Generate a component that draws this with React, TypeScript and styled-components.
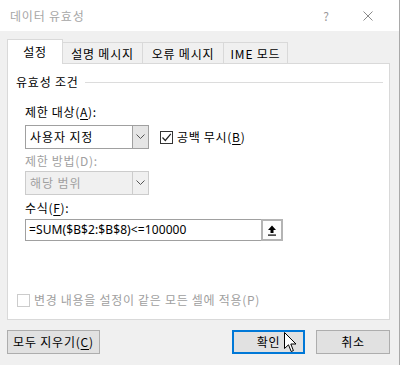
import React from "react";
import styled, { createGlobalStyle } from "styled-components";

const Global = createGlobalStyle`
  html, body { margin: 0; padding: 0; background: #f0f0f0; }
  body { font-family: "Noto Sans CJK KR", "Noto Sans", sans-serif; font-size: 12px; }
  * { box-sizing: border-box; }
`;

const Window = styled.div`
  position: relative;
  width: 400px;
  height: 365px;
  background: #f0f0f0;
  border-right: 1px solid #a9a9a9;
  display: flex;
  flex-direction: column;
  color: #000;
  font-size: 12px;
  line-height: 16px;
`;

const TitleBar = styled.div`
  height: 31px;
  background: #fff;
  display: flex;
  align-items: center;
  padding-left: 10px;
  color: #a6a6a6;
  font-size: 12px;
`;

const Title = styled.div`
  flex: 1;
  letter-spacing: 0.8px;
`;

const TitleBtn = styled.div<{ $w: number }>`
  width: ${(p) => p.$w}px;
  height: 31px;
  display: flex;
  align-items: center;
  justify-content: center;
  color: #9a9a9a;
`;

const Body = styled.div`
  flex: 1;
  display: flex;
  flex-direction: column;
  padding: 8px 9px 0 7px;
`;

const TabRow = styled.div`
  display: flex;
  align-items: flex-end;
  height: 25px;
  position: relative;
  z-index: 1;
  margin-bottom: -1px;
`;

const Tab = styled.div<{ $active?: boolean; $w: number }>`
  width: ${(p) => p.$w}px;
  height: ${(p) => (p.$active ? 25 : 22)}px;
  background: ${(p) => (p.$active ? "#fff" : "#f0f0f0")};
  border: 1px solid #d9d9d9;
  border-bottom: ${(p) => (p.$active ? "none" : "1px solid #d9d9d9")};
  border-left: ${(p) => (p.$active ? "1px solid #d9d9d9" : "none")};
  display: flex;
  align-items: center;
  justify-content: center;
  padding-top: ${(p) => (p.$active ? 0 : 1)}px;
  font-size: 12px;
  letter-spacing: 0.8px;
`;

const Panel = styled.div`
  height: 257px;
  background: #fff;
  border: 1px solid #d9d9d9;
  display: flex;
  flex-direction: column;
  padding: 10px 6px 0 8px;
`;

const GroupHeader = styled.div`
  display: flex;
  align-items: center;
  gap: 6px;
  letter-spacing: 0.8px;
`;

const GroupLine = styled.div`
  flex: 1;
  height: 1px;
  background: #dcdcdc;
`;

const Indent = styled.div`
  padding-left: 9px;
  display: flex;
  flex-direction: column;
`;

const Label = styled.div<{ $disabled?: boolean; $mt: number }>`
  margin-top: ${(p) => p.$mt}px;
  color: ${(p) => (p.$disabled ? "#a0a0a0" : "#000")};
  letter-spacing: 0.7px;
`;

const U = styled.span`
  text-decoration: underline;
  text-underline-offset: 2px;
`;

const Row = styled.div`
  display: flex;
  align-items: center;
  margin-top: 5px;
`;

const Select = styled.div<{ $disabled?: boolean }>`
  width: 124px;
  height: 24px;
  border: 1px solid ${(p) => (p.$disabled ? "#cccccc" : "#a0a0a0")};
  background: ${(p) => (p.$disabled ? "#f0f0f0" : "#fff")};
  display: flex;
  color: ${(p) => (p.$disabled ? "#a0a0a0" : "#000")};
`;

const SelectText = styled.div`
  flex: 1;
  display: flex;
  align-items: center;
  padding-left: 4px;
  letter-spacing: 0.9px;
`;

const SelectBtn = styled.div<{ $disabled?: boolean }>`
  width: 16px;
  background: ${(p) => (p.$disabled ? "#f0f0f0" : "#e5e5e5")};
  border-left: 1px solid ${(p) => (p.$disabled ? "#cccccc" : "#a0a0a0")};
  display: flex;
  align-items: center;
  justify-content: center;
`;

const CheckWrap = styled.div<{ $disabled?: boolean; $ml?: number }>`
  display: flex;
  align-items: center;
  gap: 4px;
  margin-left: ${(p) => p.$ml ?? 0}px;
  color: ${(p) => (p.$disabled ? "#a0a0a0" : "#000")};
  letter-spacing: 0.7px;
`;

const Box = styled.div<{ $disabled?: boolean }>`
  width: 13px;
  height: 13px;
  border: 1px solid ${(p) => (p.$disabled ? "#cccccc" : "#333")};
  background: #fff;
  display: flex;
  align-items: center;
  justify-content: center;
`;

const Formula = styled.div`
  width: 258px;
  height: 22px;
  margin-top: 3px;
  border: 1px solid #a0a0a0;
  display: flex;
`;

const FormulaText = styled.div`
  flex: 1;
  display: flex;
  align-items: center;
  padding-left: 3px;
  font-family: "Noto Sans", sans-serif;
  letter-spacing: 0.1px;
`;

const RefBtn = styled.div`
  width: 22px;
  margin: -1px -1px -1px 0;
  border: 2px solid #b4b4b4;
  background: #fdfdfd;
  display: flex;
  align-items: center;
  justify-content: center;
`;

const Spacer = styled.div`
  flex: 1;
`;

const BottomCheck = styled.div`
  padding-left: 1px;
  margin-bottom: 11px;
`;

const ButtonRow = styled.div`
  display: flex;
  align-items: center;
  margin-top: 10px;
  gap: 11px;
`;

const Button = styled.div<{ $w: number; $primary?: boolean }>`
  width: ${(p) => p.$w}px;
  height: 24px;
  background: #e1e1e1;
  border: ${(p) => (p.$primary ? "2px solid #0078d7" : "1px solid #adadad")};
  display: flex;
  align-items: center;
  justify-content: center;
  letter-spacing: 0.8px;
`;

const Cursor = styled.svg`
  position: absolute;
  left: 284px;
  top: 332px;
`;

const Chevron = () => (
  <svg width="9" height="6" viewBox="0 0 9 6">
    <path d="M0.5 0.5 L4.5 4.5 L8.5 0.5" fill="none" stroke="#555" strokeWidth="1" />
  </svg>
);

export default function App() {
  return (
    <>
      <Global />
      <Window>
        <TitleBar>
          <Title>데이터 유효성</Title>
          <TitleBtn $w={22}>?</TitleBtn>
          <TitleBtn $w={62}>
            <svg width="10" height="10" viewBox="0 0 10 10">
              <path d="M0.5 0.5 L9.5 9.5 M9.5 0.5 L0.5 9.5" stroke="#8a8a8a" strokeWidth="1" />
            </svg>
          </TitleBtn>
        </TitleBar>
        <Body>
          <TabRow>
            <Tab $active $w={56}>설정</Tab>
            <Tab $w={80}>설명 메시지</Tab>
            <Tab $w={81}>오류 메시지</Tab>
            <Tab $w={64}>IME 모드</Tab>
          </TabRow>
          <Panel>
            <GroupHeader>
              <span>유효성 조건</span>
              <GroupLine />
            </GroupHeader>
            <Indent>
              <Label $mt={14}>
                제한 대상(<U>A</U>):
              </Label>
              <Row>
                <Select>
                  <SelectText>사용자 지정</SelectText>
                  <SelectBtn>
                    <Chevron />
                  </SelectBtn>
                </Select>
                <CheckWrap $ml={11}>
                  <Box>
                    <svg width="11" height="11" viewBox="0 0 11 11">
                      <path d="M1.5 5.5 L4.3 8.5 L9.8 1.8" fill="none" stroke="#222" strokeWidth="1.2" />
                    </svg>
                  </Box>
                  <span>
                    공백 무시(<U>B</U>)
                  </span>
                </CheckWrap>
              </Row>
              <Label $disabled $mt={4}>
                제한 방법(D):
              </Label>
              <Row style={{ marginTop: 2 }}>
                <Select $disabled>
                  <SelectText>해당 범위</SelectText>
                  <SelectBtn $disabled>
                    <Chevron />
                  </SelectBtn>
                </Select>
              </Row>
              <Label $mt={5}>
                수식(<U>F</U>):
              </Label>
              <Formula>
                <FormulaText>=SUM($B$2:$B$8)&lt;=100000</FormulaText>
                <RefBtn>
                  <svg width="10" height="11" viewBox="0 0 10 11">
                    <path d="M5 0.5 L9 5 L6.5 5 L6.5 8 L3.5 8 L3.5 5 L1 5 Z" fill="#000" />
                    <rect x="1" y="9.5" width="8" height="1.2" fill="#000" />
                  </svg>
                </RefBtn>
              </Formula>
            </Indent>
            <Spacer />
            <BottomCheck>
              <CheckWrap $disabled>
                <Box $disabled />
                <span>변경 내용을 설정이 같은 모든 셀에 적용(P)</span>
              </CheckWrap>
            </BottomCheck>
          </Panel>
          <ButtonRow>
            <Button $w={93}>
              <span>
                모두 지우기(<U>C</U>)
              </span>
            </Button>
            <Spacer />
            <Button $w={73} $primary>
              확인
            </Button>
            <Button $w={74}>취소</Button>
          </ButtonRow>
        </Body>
        <Cursor width="13" height="21" viewBox="0 0 13 21">
          <path
            d="M0.5 0.5 L0.5 16.5 L4.5 12.8 L7.2 19.5 L9.4 18.6 L6.8 12 L12 12 Z"
            fill="#fff"
            stroke="#000"
            strokeWidth="1"
            strokeLinejoin="miter"
          />
        </Cursor>
      </Window>
    </>
  );
}
